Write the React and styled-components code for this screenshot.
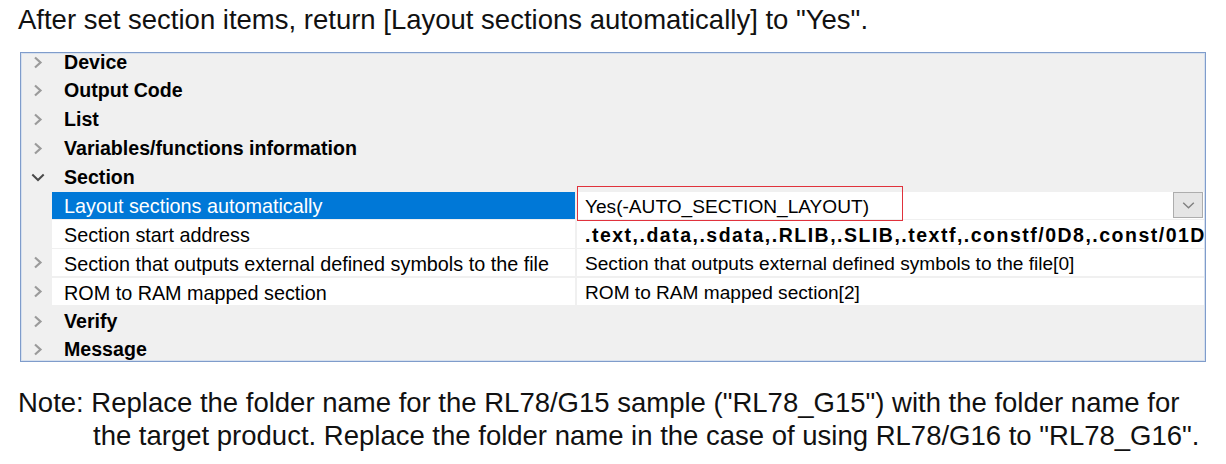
import styled, { createGlobalStyle } from "styled-components";

// Page basics
const GlobalStyle = createGlobalStyle`
  html, body {
    margin: 0;
    padding: 0;
    background: #ffffff;
  }
  body {
    font-family: "Liberation Sans", Arial, sans-serif;
    color: #111;
    width: 1226px;
    height: 464px;
    overflow: hidden;
  }
`;

const Page = styled.div`
  padding: 4px 0 0 18px;
`;

const Lead = styled.p`
  margin: 0;
  font-size: 27.5px;
  line-height: 31px;
  white-space: nowrap;
`;

// Property grid
const Panel = styled.div`
  position: relative;
  box-sizing: border-box;
  margin: 17px 0 0 2px;
  width: 1186px;
  height: 310px;
  border: 1px solid #7f9ccb;
  box-shadow: inset 0 0 0 1px #d6e0ee;
  background: #f0f0f0;
  overflow: hidden;
`;

const List = styled.div`
  margin-top: -5.4px;
  display: flex;
  flex-direction: column;
`;

const Row = styled.div`
  display: grid;
  grid-template-columns: 31px 525px 1fr;
  height: 28.8px;
  padding-bottom: ${(p) => (p.$cat ? "0" : "1.5px")};
  box-sizing: border-box;
`;

const Gutter = styled.div`
  display: flex;
  align-items: center;
  justify-content: center;
  padding-left: 2px;
`;

const CatLabel = styled.div`
  grid-column: 2 / 4;
  display: flex;
  align-items: center;
  padding-left: 12px;
  font-size: 19.6px;
  font-weight: bold;
  color: #000;
`;

const NameCell = styled.div`
  display: flex;
  align-items: center;
  margin-right: 2px;
  padding: 3px 0 0 12px;
  font-size: 19.8px;
  background: ${(p) => (p.$selected ? "#0078d7" : "#ffffff")};
  color: ${(p) => (p.$selected ? "#ffffff" : "#000")};
  white-space: nowrap;
  overflow: hidden;
`;

const ValueCell = styled.div`
  position: relative;
  display: flex;
  align-items: center;
  margin-right: 1px;
  padding-left: 8px;
  background: #ffffff;
  color: #000;
  min-width: 0;
`;

const ValueText = styled.span`
  padding-top: 3px;
  white-space: nowrap;
  overflow: hidden;
  font-size: ${(p) => (p.$bold ? "19.5px" : "19.1px")};
  font-weight: ${(p) => (p.$bold ? "bold" : "normal")};
  letter-spacing: ${(p) => (p.$bold ? "1.5px" : "0")};
`;

const DropButton = styled.div`
  flex: none;
  margin-left: auto;
  margin-right: 1px;
  width: 30px;
  height: 26px;
  box-sizing: border-box;
  border: 1px solid #adadad;
  background: #e5e5e5;
  display: flex;
  align-items: center;
  justify-content: center;
`;

const Marker = styled.div`
  position: absolute;
  z-index: 2;
  left: 0;
  top: -6px;
  width: 326px;
  height: 35px;
  box-sizing: border-box;
  border: 1.5px solid #e0323c;
  pointer-events: none;
`;

const Note = styled.p`
  margin: 24px 0 0;
  padding-left: 75px;
  text-indent: -75px;
  font-size: 27.5px;
  line-height: 33px;
  white-space: nowrap;
`;

function ChevronRight() {
  return (
    <svg width="10" height="13" viewBox="0 0 10 13">
      <path d="M2 1.5 L7.5 6.5 L2 11.5" fill="none" stroke="#9b9b9b" strokeWidth="2.2" />
    </svg>
  );
}

function ChevronDown({ color = "#4a4a4a", w = 14, sw = 2 }) {
  return (
    <svg width={w} height="9" viewBox="0 0 14 9">
      <path d="M1.3 1.5 L7 7 L12.7 1.5" fill="none" stroke={color} strokeWidth={sw} />
    </svg>
  );
}

const rows = [
  { cat: true, label: "Device" },
  { cat: true, label: "Output Code" },
  { cat: true, label: "List" },
  { cat: true, label: "Variables/functions information" },
  { cat: true, label: "Section", open: true },
  {
    label: "Layout sections automatically",
    value: "Yes(-AUTO_SECTION_LAYOUT)",
    selected: true,
    dropdown: true,
    marked: true,
  },
  {
    label: "Section start address",
    value: ".text,.data,.sdata,.RLIB,.SLIB,.textf,.constf/0D8,.const/01D0,.init_array",
    bold: true,
  },
  {
    label: "Section that outputs external defined symbols to the file",
    value: "Section that outputs external defined symbols to the file[0]",
    more: true,
  },
  {
    label: "ROM to RAM mapped section",
    value: "ROM to RAM mapped section[2]",
    more: true,
  },
  { cat: true, label: "Verify" },
  { cat: true, label: "Message" },
];

export default function App() {
  return (
    <Page>
      <GlobalStyle />
      <Lead>After set section items, return [Layout sections automatically] to "Yes".</Lead>
      <Panel>
        <List>
          {rows.map((r) =>
            r.cat ? (
              <Row key={r.label} $cat>
                <Gutter>{r.open ? <ChevronDown /> : <ChevronRight />}</Gutter>
                <CatLabel>{r.label}</CatLabel>
              </Row>
            ) : (
              <Row key={r.label}>
                <Gutter>{r.more && <ChevronRight />}</Gutter>
                <NameCell $selected={r.selected}>{r.label}</NameCell>
                <ValueCell>
                  <ValueText $bold={r.bold}>{r.value}</ValueText>
                  {r.dropdown && (
                    <DropButton>
                      <ChevronDown color="#808080" w={13} sw={1.5} />
                    </DropButton>
                  )}
                  {r.marked && <Marker />}
                </ValueCell>
              </Row>
            )
          )}
        </List>
      </Panel>
      <Note>
        Note: Replace the folder name for the RL78/G15 sample ("RL78_G15") with the folder name for
        <br />
        the target product. Replace the folder name in the case of using RL78/G16 to "RL78_G16".
      </Note>
    </Page>
  );
}
